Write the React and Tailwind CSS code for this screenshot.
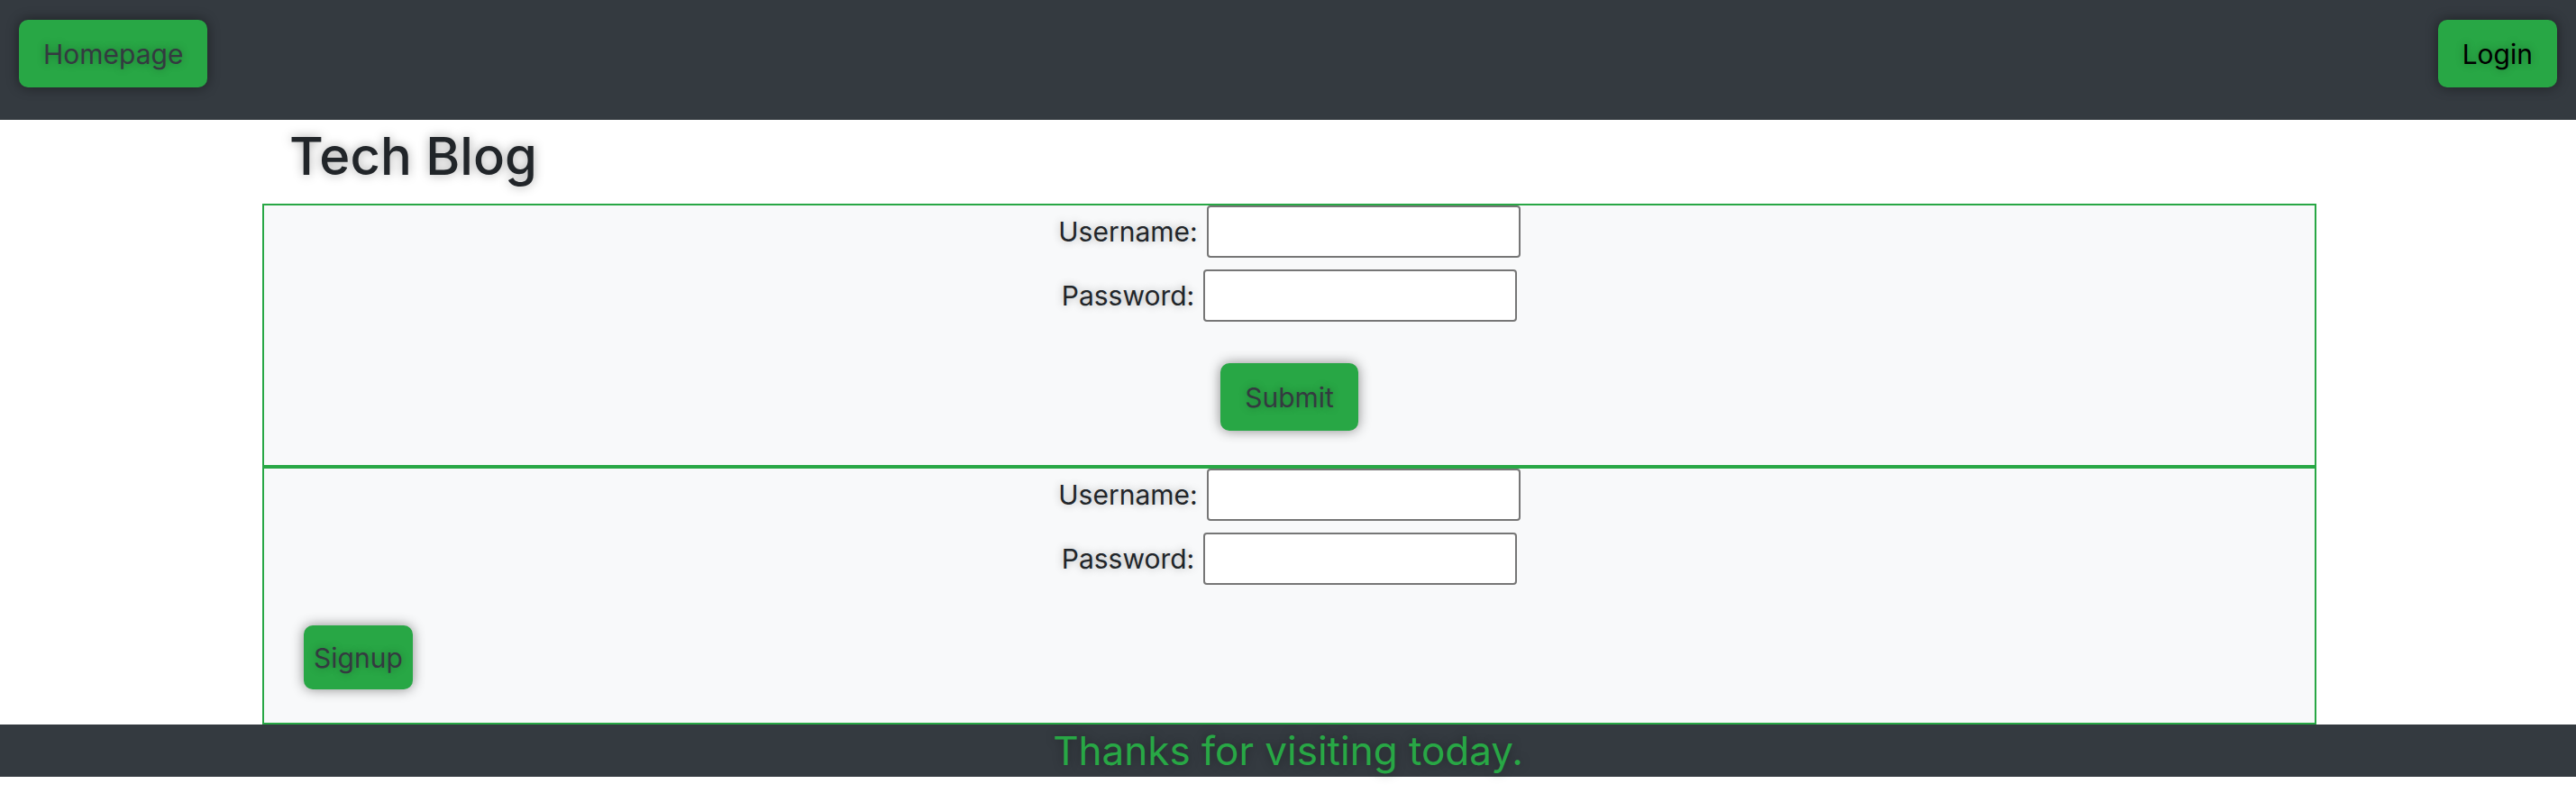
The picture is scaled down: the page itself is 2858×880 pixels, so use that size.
import React from 'react';

// shared looks
const btn =
  "rounded-[10px] bg-[#28a745] text-[30px] leading-none shadow-[0_0_14px_rgba(0,0,0,0.45)] [text-shadow:0_0_10px_rgba(0,0,0,0.3)]";
const label = "text-[30px] leading-none text-[#212529] [text-shadow:0_0_10px_rgba(0,0,0,0.3)]";
const input = "h-[58px] w-[348px] rounded-[4px] border-2 border-[#767676] bg-white";

const Field = ({ name, type = 'text' }) => (
  <div className="flex items-center justify-center gap-[10px]">
    <label className={label}>{name}:</label>
    <input type={type} className={input} />
  </div>
);

const App = () => {
  return (
    <div className="min-h-screen bg-white font-['Inter',sans-serif]">
      {/* top bar */}
      <header className="h-[133px] bg-[#343a40] flex items-start justify-between px-[21px] pt-[22px]">
        <button className={`${btn} h-[75px] px-[27px] text-[#343a40]`}>Homepage</button>
        <button className={`${btn} h-[75px] px-[27px] text-black`}>Login</button>
      </header>

      <main className="ml-[291px] w-[2279px]">
        <h1 className="h-[93px] pl-[30px] text-[58px] font-medium leading-[80px] text-[#212529] [text-shadow:0_0_12px_rgba(0,0,0,0.35)]">
          Tech Blog
        </h1>

        {/* login form */}
        <form className="h-[292px] border-2 border-[#28a745] bg-[#f8f9fa] flex flex-col items-center">
          <div className="flex flex-col gap-[13px]">
            <Field name="Username" />
            <Field name="Password" type="password" />
          </div>
          <button type="button" className={`${btn} h-[75px] px-[27px] mt-[46px] text-[#343a40]`}>Submit</button>
        </form>

        {/* signup form */}
        <form className="h-[286px] border-2 border-[#28a745] bg-[#f8f9fa] flex flex-col">
          <div className="flex flex-col gap-[13px]">
            <Field name="Username" />
            <Field name="Password" type="password" />
          </div>
          <div className="pl-[44px] mt-[45px]">
            <button type="button" className={`${btn} h-[71px] px-[11px] text-[#343a40]`}>Signup</button>
          </div>
        </form>
      </main>

      <footer className="h-[58px] bg-[#343a40] flex justify-center">
        <p className="text-[44px] leading-[58px] text-[#28a745] [text-shadow:0_0_12px_rgba(0,0,0,0.35)]">
          Thanks for visiting today.
        </p>
      </footer>
    </div>
  );
};

export default App;
